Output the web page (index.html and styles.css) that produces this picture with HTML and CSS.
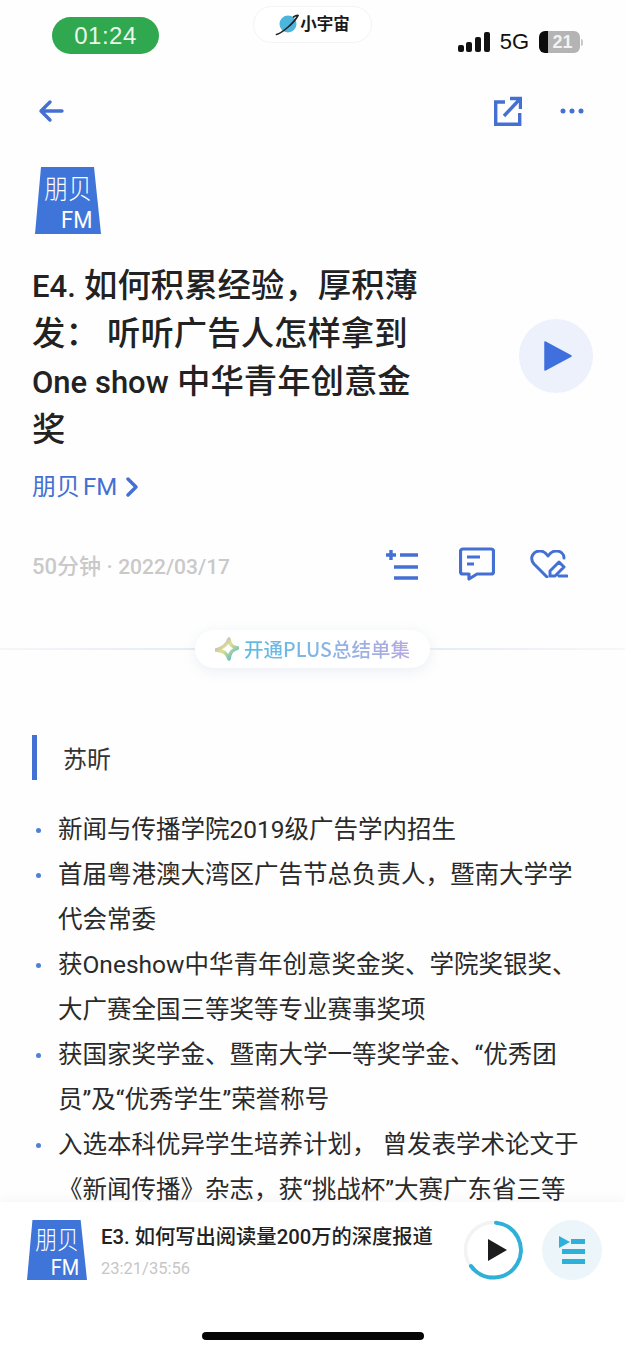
FILE: index.html
```html
<!DOCTYPE html>
<html lang="zh-CN">
<head>
<meta charset="utf-8">
<title>E4. 如何积累经验</title>
<link rel="stylesheet" href="styles.css">
</head>
<body>
<div class="app">
  <main class="scroll">
    <div class="status">
      <div class="clock">01:24</div>
      <div class="brand">
        <svg class="planet" viewBox="0 0 24 22" width="24" height="22"><circle cx="13" cy="10" r="8.500" fill="#4db4dc"/><path d="M1.500 20.500C7 19 19 9 23 1.500 21.500 1 20 2 18.500 3" fill="none" stroke="#222" stroke-width="1.600" stroke-linecap="round"/></svg>
        <span>小宇宙</span>
      </div>
      <div class="indicators">
        <div class="signal"><i class="s1"></i><i class="s2"></i><i class="s3"></i><i class="s4"></i></div>
        <span class="net">5G</span>
        <div class="battery"><b>21</b></div>
        <i class="cap"></i>
      </div>
    </div>

    <nav class="topnav">
      <svg viewBox="0 0 26 24" width="26" height="24"><path d="M24 12H3M12 3l-9 9 9 9" fill="none" stroke="#4470d4" stroke-width="3.400" stroke-linecap="round" stroke-linejoin="round"/></svg>
      <div class="topnav-right">
        <svg viewBox="0 0 28 30" width="28" height="30"><path d="M11 6H1.700v22.300h24V17" fill="none" stroke="#4470d4" stroke-width="3.400"/><path d="M10 20L25 4M16 2.500h10.500V13" fill="none" stroke="#4470d4" stroke-width="3.400"/></svg>
        <svg viewBox="0 0 24 6" width="24" height="6"><circle cx="3" cy="3" r="2.500" fill="#4470d4"/><circle cx="12" cy="3" r="2.500" fill="#4470d4"/><circle cx="21" cy="3" r="2.500" fill="#4470d4"/></svg>
      </div>
    </nav>

    <svg class="logo" viewBox="0 0 66 67" width="66" height="67">
      <polygon points="6,0 59,0 66,67 0,67" fill="#3f74d8"/>
      <text class="logo-cn" transform="translate(9 32) scale(1 1.15)">朋贝</text>
      <text class="logo-fm" transform="translate(26 61) scale(1 1.1)">FM</text>
    </svg>

    <div class="episode">
      <h1 class="title">
        <span class="title-line"><span class="latin">E4.</span> 如何积累经验，厚积薄</span>
        <span class="title-line">发： 听听广告人怎样拿到</span>
        <span class="title-line"><span class="latin">One show</span> 中华青年创意金</span>
        <span class="title-line">奖</span>
      </h1>
      <button class="play" aria-label="播放"><svg viewBox="0 0 28 32" width="28" height="32"><path d="M1 2L27 16 1 30z" fill="#3f70dd" stroke="#3f70dd" stroke-width="1.500" stroke-linejoin="round"/></svg></button>
    </div>

    <div class="source"><span>朋贝 FM</span> <svg viewBox="0 0 12 20" width="12" height="20"><path d="M2 2l8 8-8 8" fill="none" stroke="#4470d4" stroke-width="3.400" stroke-linecap="round" stroke-linejoin="round"/></svg></div>

    <div class="meta">
      <span class="meta-text">50分钟 · <span class="meta-date">2022/03/17</span></span>
      <div class="actions">
        <svg class="act-list" viewBox="0 0 34 32" width="34" height="32"><path d="M1 7h10M6 2v10M15 7h18M9 19h24M9 30h24" fill="none" stroke="#4470d4" stroke-width="3.400"/></svg>
        <svg viewBox="0 0 36 34" width="36" height="34"><path d="M4 2h28a2.500 2.500 0 0 1 2.500 2.500v20a2.500 2.500 0 0 1-2.500 2.500H18l-8 5v-5H4a2.500 2.500 0 0 1-2.500-2.500v-20A2.500 2.500 0 0 1 4 2z" fill="none" stroke="#4470d4" stroke-width="3.200" stroke-linejoin="round"/><path d="M8 10h13M8 17h7" fill="none" stroke="#4470d4" stroke-width="3"/></svg>
        <svg viewBox="0 0 38 28" width="38" height="28"><path d="M17 27L4 14C-1 8 3 1 10 1c4 0 6 2 8 5 2-3 5-5 8-5 5 0 8 3 8 7" fill="none" stroke="#4470d4" stroke-width="3" stroke-linecap="round" stroke-linejoin="round"/><path d="M20 26v-5l9-9 5 5-9 9zM29 26h8" fill="none" stroke="#4470d4" stroke-width="3" stroke-linecap="round" stroke-linejoin="round"/></svg>
      </div>
    </div>

    <div class="divider">
      <i class="rule rule-left"></i>
      <div class="plus-pill">
        <svg viewBox="0 0 24 24" width="24" height="24"><defs><linearGradient id="spark" x1="0" y1="0" x2="1" y2="1"><stop offset="0" stop-color="#a8a6ea"/><stop offset=".45" stop-color="#dfe08a"/><stop offset="1" stop-color="#36b2d6"/></linearGradient></defs><path d="M14 2c1 6 3 8 9 9-5 2-8 3-9 11-2-6-5-8-13-9 7-2 11-5 13-11z" fill="none" stroke="url(#spark)" stroke-width="3.500" stroke-linejoin="round"/></svg>
        <span class="plus-text">开通PLUS总结单集</span>
      </div>
      <i class="rule rule-right"></i>
    </div>

    <h2 class="person">苏昕</h2>

    <ul class="bio">
      <li>新闻与传播学院2019级广告学内招生</li>
      <li>首届粤港澳大湾区广告节总负责人，暨南大学学代会常委</li>
      <li>获Oneshow中华青年创意奖金奖、学院奖银奖、大广赛全国三等奖等专业赛事奖项</li>
      <li>获国家奖学金、暨南大学一等奖学金、“优秀团员”及“优秀学生”荣誉称号</li>
      <li>入选本科优异学生培养计划， 曾发表学术论文于《新闻传播》杂志，获“挑战杯”大赛广东省三等</li>
    </ul>
  </main>

  <footer class="player">
    <div class="player-row">
      <svg class="mini-logo" viewBox="0 0 66 67" width="60" height="60" preserveAspectRatio="none">
        <polygon points="6,0 59,0 66,67 0,67" fill="#3f74d8"/>
        <text class="logo-cn" transform="translate(9 32) scale(1 1.15)">朋贝</text>
        <text class="logo-fm" transform="translate(26 61) scale(1 1.1)">FM</text>
      </svg>
      <div class="track">
        <div class="track-title">E3. 如何写出阅读量200万的深度报道</div>
        <div class="track-time">23:21/35:56</div>
      </div>
      <div class="ring">
        <svg viewBox="0 0 60 60" width="60" height="60"><circle cx="30" cy="30" r="27.500" fill="none" stroke="#f3f3f3" stroke-width="3.500"/><path d="M33 2.700A27.500 27.500 0 1 1 8 46" fill="none" stroke="#2fb0d8" stroke-width="4" stroke-linecap="round"/><path d="M25 19L44 30 25 41z" fill="#1c1c1e"/></svg>
      </div>
      <div class="queue">
        <svg viewBox="0 0 28 28" width="28" height="28"><path d="M1 0l11 6-11 6z" fill="#2fb0d8"/><path d="M13 3h14v5H13zM4 13h23v5H4zM4 23h23v5H4z" fill="#2fb0d8"/></svg>
      </div>
    </div>
    <div class="home"></div>
  </footer>
</div>
</body>
</html>
```

FILE: styles.css
```css
* { box-sizing: border-box; }
html, body { margin: 0; padding: 0; height: 100%; }
body {
  background: #fefefe;
  color: #1d1d1f;
  font-family: "Roboto", "Noto Sans CJK SC", sans-serif;
}
.app { width: 625px; height: 1353px; display: flex; flex-direction: column; overflow: hidden; }
.scroll { flex: 1; min-height: 0; overflow: hidden; }

.status { display: flex; align-items: flex-start; height: 96px; padding: 6px 42px 0 52px; }
.clock {
  width: 107px; height: 37px; margin-top: 11px; border-radius: 19px;
  background: #2fa84f; color: #e9f7ec; font: 400 24px/37px "Liberation Sans", sans-serif;
  text-align: center; letter-spacing: .5px;
}
.brand {
  width: 119px; height: 37px; margin-left: 94px; border-radius: 19px; border: 1px solid #f3f3f3;
  background: #fff; display: flex; align-items: center; justify-content: center; gap: 1px;
  font: 700 16.500px/1 "Noto Sans CJK SC", sans-serif; color: #1a1a1a;
}
.brand span { margin-top: -2px; }
.indicators { display: flex; align-items: center; margin: 24px 0 0 auto; height: 24px; }
.signal { display: flex; align-items: flex-end; gap: 2.600px; height: 20px; }
.signal i { display: block; width: 6px; background: #111; border-radius: 2px; }
.s1 { height: 7px; } .s2 { height: 10px; } .s3 { height: 15px; } .s4 { height: 20px; }
.net { margin-left: 10px; font: 400 22px/24px "Liberation Sans", sans-serif; color: #111; }
.battery {
  width: 41px; height: 22px; margin-left: 10px; border-radius: 6px; text-align: center;
  background: linear-gradient(90deg, #0c0c0c 0, #0c0c0c 21%, #b4b4b4 21%, #b4b4b4 100%);
  color: #f2f2f2; font: 700 18px/22px "Liberation Sans", sans-serif;
}
.battery b { padding-left: 6px; }
.cap { display: block; width: 2px; height: 7px; margin-left: 1px; background: #c8c8c8; border-radius: 0 2px 2px 0; }

.topnav { display: flex; align-items: center; justify-content: space-between; height: 30px; padding: 0 41px 0 38px; }
.topnav-right { display: flex; align-items: center; gap: 38px; }
.logo { display: block; margin: 41px 0 0 35px; }
.logo-cn { font: 300 24px "Noto Sans CJK SC", sans-serif; fill: #fff; }
.logo-fm { font: 400 22px "Roboto", sans-serif; fill: #fff; }

.episode { display: flex; align-items: center; justify-content: space-between; padding: 28px 32px 0; }
.title { margin: 0; font-size: 33.400px; font-weight: 500; line-height: 48px; color: #222; }
.title-line { display: block; height: 48px; white-space: nowrap; }
.latin { font-size: 31px; }
.play {
  width: 74px; height: 74px; margin-bottom: 4px; border: 0; border-radius: 50%; background: #edf1fb; padding: 0 0 0 4px;
  display: flex; align-items: center; justify-content: center;
}
.source { display: flex; align-items: center; gap: 9px; margin: 15px 0 0 32px; font-size: 24px; line-height: 36px; color: #4470d4; word-spacing: -3px; }

.meta { display: flex; align-items: center; justify-content: space-between; margin-top: 41px; padding: 0 57px 0 32px; height: 36px; }
.meta-text { font-size: 22px; font-weight: 500; color: #c9c9c9; }
.meta-date { font-size: 21px; }
.actions { display: flex; align-items: center; gap: 35px; }
.act-list { margin-right: 5px; }

.divider { display: flex; align-items: center; margin-top: 48px; height: 38px; }
.rule { flex: 1; height: 2px; }
.rule-left { background: linear-gradient(90deg, #f4f6f9, #e6ecf3); }
.rule-right { background: linear-gradient(90deg, #e6ecf3, #f6f7f9); }
.plus-pill {
  width: 235px; height: 38px; border-radius: 19px; background: #fff; box-shadow: 0 3px 14px rgba(120, 140, 180, .14);
  display: flex; align-items: center; justify-content: center; gap: 5px;
}
.plus-text {
  font: 500 19.500px/38px "Noto Sans CJK SC", sans-serif;
  background: linear-gradient(90deg, #5dbbe0, #7fb6e6 40%, #b6a9e0);
  -webkit-background-clip: text; background-clip: text; color: transparent;
}

.person {
  margin: 67px 0 0 32px; height: 45px; border-left: 5px solid #4470d4; padding-left: 26px;
  font-size: 24px; font-weight: 400; line-height: 50px; color: #333;
}
.bio { list-style: none; margin: 27px 0 0; padding: 0 40px 0 58px; font-size: 24.500px; line-height: 45px; color: #2a2a2a; }
.bio li { position: relative; }
.bio li::before {
  content: ""; position: absolute; left: -22px; top: 21px; width: 5px; height: 5px; border-radius: 50%; background: #4f80d8;
}

.player { flex: none; height: 151px; background: #fff; box-shadow: 0 -4px 10px rgba(0, 0, 0, .03); }
.player-row { display: flex; align-items: center; height: 96px; padding: 0 23px 0 27px; }
.mini-logo { flex: none; }
.track { flex: 1; min-width: 0; margin-left: 14px; }
.track-title { font-size: 20.300px; font-weight: 500; line-height: 30px; margin-top: 3px; color: #222; }
.track-time { margin-top: 5px; font-size: 16.500px; line-height: 24px; color: #c6c6c6; }
.ring { flex: none; width: 60px; height: 60px; }
.queue {
  flex: none; width: 60px; height: 60px; margin-left: 19px; border-radius: 50%; background: #ebf5fa;
  display: flex; align-items: center; justify-content: center;
}
.home { width: 222px; height: 8px; margin: 34px auto 0; border-radius: 4px; background: #050505; }
```
